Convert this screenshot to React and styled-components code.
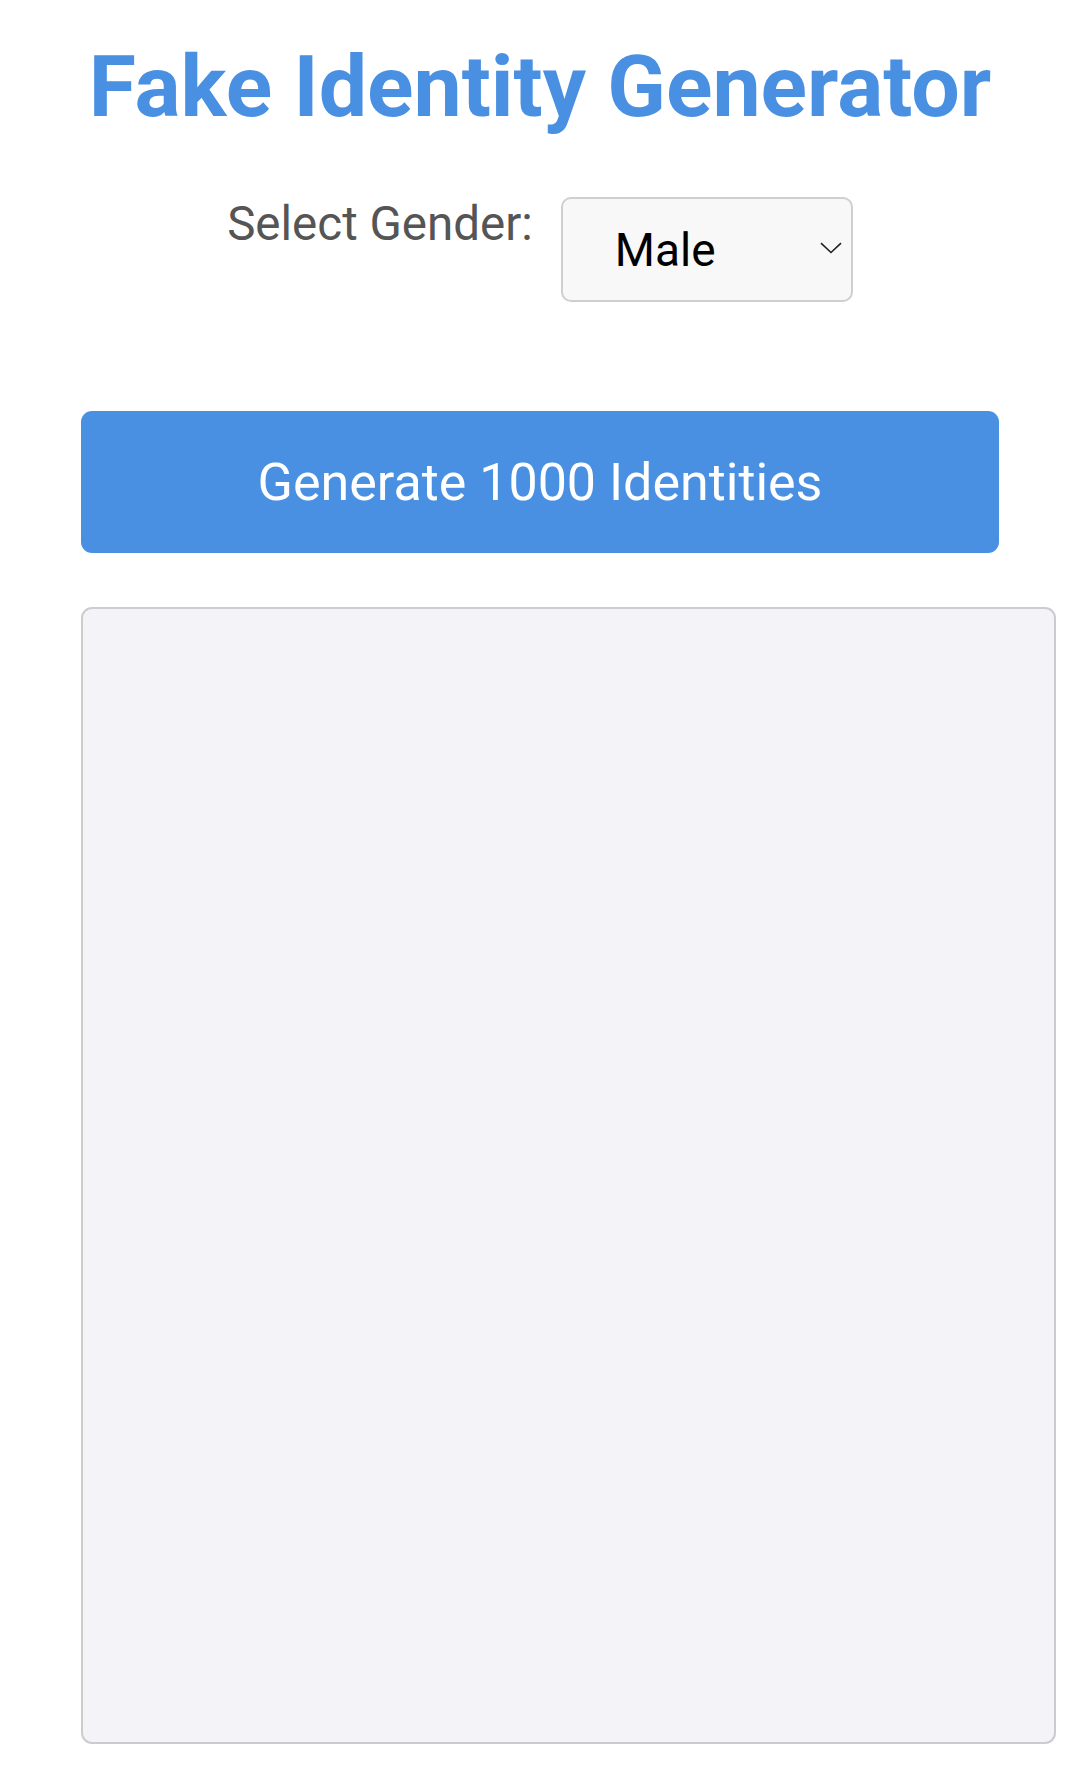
import React, { useState } from 'react'
import styled, { createGlobalStyle } from 'styled-components';

const GlobalStyle = createGlobalStyle`
    body {
        margin: 0;
        background: #ffffff;
        font-family: Roboto, "Liberation Sans", Arial, sans-serif;
    }
`

const App = () => {
    const [gender, setGender] = useState('male');
    const [output, setOutput] = useState('');

    return (
        <Container>
            <GlobalStyle />
            <Title>Fake Identity Generator</Title>
            <GenderRow>
                <Label htmlFor="gender">Select Gender:</Label>
                <SelectWrap>
                    <Select id="gender" value={gender} onChange={(e) => setGender(e.target.value)}>
                        <option value="male">Male</option>
                        <option value="female">Female</option>
                    </Select>
                    <Chevron viewBox="0 0 22 12" aria-hidden="true">
                        <path d="M1 1.2 L11 10.5 L21 1.2" />
                    </Chevron>
                </SelectWrap>
            </GenderRow>
            <GenerateButton onClick={() => setOutput('')}>Generate 1000 Identities</GenerateButton>
            <Output value={output} readOnly />
        </Container>
    )
}

export default App

const Container = styled.div`
    width: 918px;
    margin: 0 auto;
    padding-top: 36px;
    display: flex;
    flex-direction: column;
    align-items: stretch;
`
const Title = styled.h1`
    margin: 0;
    text-align: center;
    font-size: 86px;
    font-weight: 700;
    line-height: 101px;
    color: #4a90e2;
`
const GenderRow = styled.div`
    display: flex;
    justify-content: center;
    align-items: flex-start;
    gap: 28px;
    margin-top: 60px;
`
const Label = styled.label`
    font-size: 47.5px;
    line-height: 54px;
    color: #555555;
`
const SelectWrap = styled.div`
    position: relative;
    width: 292px;
    height: 105px;
`
const Select = styled.select`
    appearance: none;
    -webkit-appearance: none;
    width: 100%;
    height: 100%;
    box-sizing: border-box;
    padding: 0 0 0 52px;
    font-family: Roboto, "Liberation Sans", Arial, sans-serif;
    font-size: 46px;
    color: #000000;
    background: #f8f8f8;
    border: 2px solid #cfcfcf;
    border-radius: 10px;
    outline: none;
`
const Chevron = styled.svg`
    position: absolute;
    left: 259px;
    top: 45px;
    width: 22px;
    height: 12px;
    fill: none;
    stroke: #222222;
    stroke-width: 1.6;
    pointer-events: none;
`
const GenerateButton = styled.button`
    margin-top: 109px;
    height: 142px;
    width: 100%;
    border: none;
    border-radius: 11px;
    background: #4a90e2;
    color: #ffffff;
    font-family: Roboto, "Liberation Sans", Arial, sans-serif;
    font-size: 52px;
    cursor: pointer;
`
const Output = styled.textarea`
    margin-top: 54px;
    width: 975px;
    height: 1137px;
    box-sizing: border-box;
    padding: 28px;
    background: #f3f3f8;
    border: 2px solid #cccccc;
    border-radius: 11px;
    resize: none;
    font-family: Roboto, "Liberation Sans", Arial, sans-serif;
    font-size: 30px;
    outline: none;
`
